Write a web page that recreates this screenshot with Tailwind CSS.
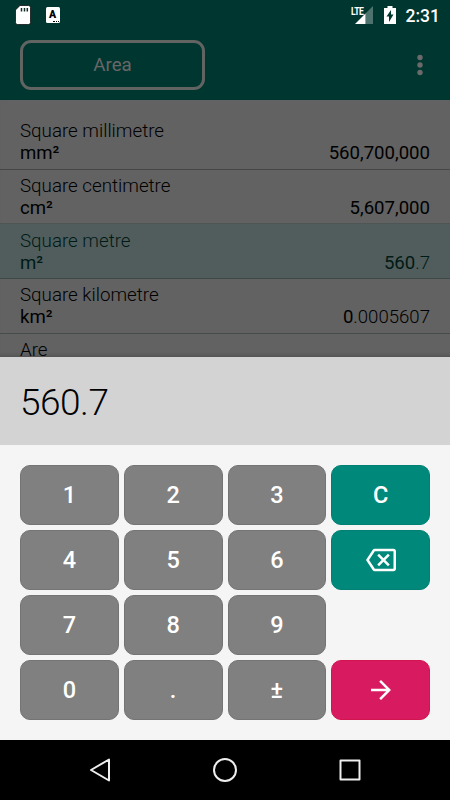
<!DOCTYPE html>
<html lang="en">
<head>
  <meta charset="UTF-8"/>
  <meta name="viewport" content="width=device-width, initial-scale=1.0"/>
  <title>Unit Converter</title>
  <script src="https://cdn.jsdelivr.net/npm/@tailwindcss/browser@4"></script>
</head>
<body class="bg-black font-['Roboto',sans-serif]">
  <div class="w-[450px] h-[800px] flex flex-col overflow-hidden">

    <!-- Status bar -->
    <div class="h-[30px] shrink-0 bg-[#003630] text-white flex items-center pl-[14px] pr-[10px]">
      <svg class="w-[18px] h-[20px]" viewBox="0 0 18 20">
        <path d="M6 .5h8.500a2 2 0 0 1 2 2v15a2 2 0 0 1-2 2h-11a2 2 0 0 1-2-2V5z" fill="#fff" stroke="#000" stroke-width=".7"/>
        <path d="M7.500 3v3.500M10.500 3v3.500M13.300 3v3.500" stroke="#122d29" stroke-width="1.500"/>
      </svg>
      <div class="relative ml-[14px] w-[14px] h-[15.500px] rounded-[1.500px] bg-white text-black">
        <span class="absolute left-[3px] top-[1px] text-[10.500px] leading-[13px] font-black">A</span>
        <span class="absolute right-[1px] bottom-[1px] w-[6px] border-b border-dotted border-black"></span>
      </div>
      <div class="relative ml-auto mr-[10px] w-[23px] h-[20px]">
        <span class="absolute left-0 top-[1px] text-[11.500px] leading-[10px] font-bold tracking-[-0.700px] origin-left scale-x-75">LTE</span>
        <svg class="absolute left-[4px] top-[1px] w-[18px] h-[18px]" viewBox="0 0 18 18">
          <path d="M18 0v18H10.500V7.500z" fill="#4d736e"/>
          <path d="M10.500 7.500V18H0z" fill="#fff"/>
        </svg>
      </div>
      <svg class="w-[12px] h-[18px] mr-[10px]" viewBox="0 0 12 18">
        <path d="M3.500 0h5v2H12v16H0V2h3.500z" fill="#fff"/>
        <path d="M7 4v4.500h2.500L5 16v-5.500H2.500z" fill="#003630"/>
      </svg>
      <span class="text-[17.500px] font-medium leading-[20px] pt-[2px]">2:31</span>
    </div>

    <!-- Toolbar -->
    <header class="h-[70px] shrink-0 bg-[#003630] flex items-center justify-between pl-[20px] pr-[27px]">
      <button class="w-[185px] h-[50px] border-3 border-[#626462] rounded-[11px] text-[#676767] text-[18.750px]">Area</button>
      <svg class="w-[6px] h-[22px]" viewBox="0 0 6 22" fill="#6a6a6a">
        <circle cx="3" cy="3.500" r="2.700"/>
        <circle cx="3" cy="11" r="2.700"/>
        <circle cx="3" cy="18.500" r="2.700"/>
      </svg>
    </header>

    <!-- Units -->
    <main class="h-[256.500px] shrink-0 bg-[#626262] pt-[15px] overflow-hidden text-[18.600px] leading-[22px] text-black shadow-[inset_0_-4px_3px_-2px_#555]">
      <div class="h-[54.670px] px-[20px] pt-[5.400px] border-b border-[#464646]">
        <p class="font-light text-[18.750px] leading-[22px]">Square millimetre</p>
        <div class="flex justify-between"><span>mm²</span><span>560,700,000</span></div>
      </div>
      <div class="h-[54.670px] px-[20px] pt-[5.400px] border-b border-[#4d5655]">
        <p class="font-light text-[18.750px] leading-[22px]">Square centimetre</p>
        <div class="flex justify-between"><span>cm²</span><span>5,607,000</span></div>
      </div>
      <div class="h-[54.670px] px-[20px] pt-[5.400px] border-b border-[#3d4847] bg-[#505d5c] text-[#001a16]">
        <p class="font-light text-[18.750px] leading-[22px]">Square metre</p>
        <div class="flex justify-between"><span>m²</span><span>560<span class="font-light">.7</span></span></div>
      </div>
      <div class="h-[54.670px] px-[20px] pt-[5.400px] border-b border-[#464c4b]">
        <p class="font-light text-[18.750px] leading-[22px]">Square kilometre</p>
        <div class="flex justify-between"><span>km²</span><span>0<span class="font-light">.0005607</span></span></div>
      </div>
      <div class="px-[20px] pt-[5px]">
        <p class="font-light text-[18.750px] leading-[22px]">Are</p>
      </div>
    </main>

    <!-- Input -->
    <section class="h-[88.500px] shrink-0 bg-[#d3d3d3] px-[20px] pt-[3px] flex items-center text-[37px] tracking-[-0.500px] font-light text-black">560.7</section>

    <!-- Keypad -->
    <section class="h-[295px] shrink-0 bg-[#f5f5f5] p-[20px] grid grid-cols-4 grid-rows-4 gap-[5px] text-white text-[23.500px] font-medium *:rounded-[10px] *:border">
      <button class="bg-[#808080] border-[#747474] pt-[2px]">1</button>
      <button class="bg-[#808080] border-[#747474] pt-[2px]">2</button>
      <button class="bg-[#808080] border-[#747474] pt-[2px]">3</button>
      <button class="bg-[#00897b] border-[#007f72] pt-[2px]">C</button>
      <button class="bg-[#808080] border-[#747474] pt-[2px]">4</button>
      <button class="bg-[#808080] border-[#747474] pt-[2px]">5</button>
      <button class="bg-[#808080] border-[#747474] pt-[2px]">6</button>
      <button class="bg-[#00897b] border-[#007f72] flex items-center justify-center">
        <svg class="w-[30px] h-[30px]" viewBox="0 0 24 24" fill="#fff">
          <path d="M22 3H7c-.69 0-1.230.350-1.590.880L0 12l5.410 8.110c.360.530.900.890 1.590.890h15c1.100 0 2-.900 2-2V5c0-1.100-.900-2-2-2zm0 16H7.070L2.400 12l4.660-7H22v14zm-11.590-2L14 13.410 17.590 17 19 15.590 15.410 12 19 8.410 17.590 7 14 10.590 10.410 7 9 8.410 12.590 12 9 15.590z"/>
        </svg>
      </button>
      <button class="bg-[#808080] border-[#747474] pt-[2px]">7</button>
      <button class="bg-[#808080] border-[#747474] pt-[2px]">8</button>
      <button class="bg-[#808080] border-[#747474] pt-[2px]">9</button>
      <button class="col-start-4 row-start-4 bg-[#d81b60] border-[#d2154f] flex items-center justify-center">
        <svg class="w-[30px] h-[30px]" viewBox="0 0 24 24" fill="#fff">
          <path d="M12 4l-1.410 1.410L16.170 11H4v2h12.170l-5.580 5.590L12 20l8-8z"/>
        </svg>
      </button>
      <button class="row-start-4 bg-[#808080] border-[#747474] pt-[2px]">0</button>
      <button class="row-start-4 bg-[#808080] border-[#747474] pt-[2px]">.</button>
      <button class="row-start-4 bg-[#808080] border-[#747474] pt-[2px]">±</button>
    </section>

    <!-- Navigation bar -->
    <nav class="h-[60px] shrink-0 bg-black flex items-center justify-between px-[88px]">
      <svg class="w-[24px] h-[26px]" viewBox="0 0 24 26" fill="none" stroke="#eee" stroke-width="2" stroke-linejoin="round">
        <path d="M21 2.500v21L3 13z"/>
      </svg>
      <svg class="w-[26px] h-[26px]" viewBox="0 0 26 26" fill="none" stroke="#eee" stroke-width="2">
        <circle cx="13" cy="13" r="11"/>
      </svg>
      <svg class="w-[24px] h-[24px]" viewBox="0 0 24 24" fill="none" stroke="#eee" stroke-width="2" stroke-linejoin="round">
        <rect x="2.500" y="2.500" width="19" height="19"/>
      </svg>
    </nav>
  </div>
</body>
</html>
